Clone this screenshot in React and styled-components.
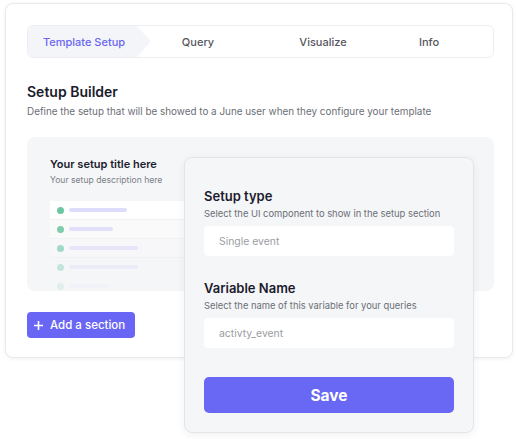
import React from 'react';
import styled, { createGlobalStyle } from 'styled-components';

const GlobalStyle = createGlobalStyle`
  html, body {
    margin: 0;
    padding: 0;
    background: #ffffff;
    font-family: Inter, "Noto Sans", sans-serif;
    -webkit-font-smoothing: antialiased;
  }
`;

const Stage = styled.div`
  position: relative;
  width: 518px;
  height: 439px;
  padding: 3px 5px 0 5px;
  box-sizing: border-box;
`;

const Card = styled.div`
  width: 508px;
  height: 355px;
  box-sizing: border-box;
  border: 1px solid #e8e9ec;
  border-radius: 8px;
  background: #fff;
  box-shadow: 0 1px 4px rgba(20, 20, 40, 0.06);
  padding: 21px 18px 0 21px;
`;

const Stepper = styled.div`
  display: flex;
  height: 33px;
  border: 1px solid #eceef1;
  border-radius: 6px;
  overflow: hidden;
  box-sizing: border-box;
`;

const Step = styled.div`
  flex: 0 0 ${(p) => p.$w}px;
  display: flex;
  align-items: center;
  justify-content: center;
  font-size: 11px;
  font-weight: 500;
  color: ${(p) => (p.$active ? '#6a66f0' : '#55575e')};
  background: ${(p) => (p.$active ? '#f4f5f8' : 'transparent')};
  padding-right: ${(p) => (p.$active ? 11 : 0)}px;
  box-sizing: border-box;
  clip-path: ${(p) =>
    p.$active ? 'polygon(0 0, calc(100% - 14px) 0, 100% 50%, calc(100% - 14px) 100%, 0 100%)' : 'none'};
`;

const Heading = styled.h2`
  margin: 25px 0 0 0;
  font-size: 14px;
  font-weight: 600;
  color: #1b1c2b;
  line-height: 18px;
`;

const Desc = styled.p`
  margin: 3px 0 0 0;
  font-size: 9.9px;
  color: #6b6e76;
  line-height: 14px;
`;

const Preview = styled.div`
  margin-top: 19px;
  height: 154px;
  background: #f5f6f8;
  border-radius: 8px;
  padding: 20px 0 0 23px;
  box-sizing: border-box;
  overflow: hidden;
`;

const PreviewTitle = styled.div`
  font-size: 11px;
  font-weight: 600;
  color: #1b1c2b;
  line-height: 14px;
`;

const PreviewDesc = styled.div`
  margin-top: 3px;
  font-size: 8.6px;
  color: #7b7e86;
  line-height: 12px;
`;

const List = styled.div`
  margin-top: 15px;
  width: 140px;
  display: flex;
  flex-direction: column;
`;

const ListRow = styled.div`
  height: 18px;
  display: flex;
  align-items: center;
  gap: 5px;
  padding-left: 7px;
  background: rgba(255, 255, 255, ${(p) => p.$bg});
  border-bottom: 1px solid #f0f1f4;
  opacity: ${(p) => p.$o};
`;

const Dot = styled.span`
  width: 7px;
  height: 7px;
  border-radius: 50%;
  background: #6cc6a1;
`;

const Line = styled.span`
  width: ${(p) => p.$w}px;
  height: 4px;
  border-radius: 2px;
  background: #dedcfb;
`;

const AddButton = styled.button`
  margin-top: 21px;
  display: inline-flex;
  align-items: center;
  gap: 7px;
  height: 26px;
  padding: 0 10px 0 7px;
  border: none;
  border-radius: 4px;
  background: #6a66f5;
  color: #fff;
  font-family: inherit;
  font-size: 11.5px;
  font-weight: 500;
`;

const Overlay = styled.div`
  position: absolute;
  left: 184px;
  top: 157px;
  width: 290px;
  height: 276px;
  box-sizing: border-box;
  background: #f5f6f8;
  border: 1px solid #e3e5e9;
  border-radius: 8px;
  box-shadow: 0 2px 8px rgba(20, 20, 40, 0.06);
  padding: 30px 19px 0 19px;
  display: flex;
  flex-direction: column;
`;

const Field = styled.div`
  display: flex;
  flex-direction: column;
  margin-bottom: ${(p) => p.$mb}px;
`;

const FieldLabel = styled.div`
  font-size: 13px;
  font-weight: 600;
  color: #1b1c2b;
  line-height: 17px;
`;

const FieldHint = styled.div`
  margin-top: 3px;
  font-size: 9.4px;
  color: #6b6e76;
  line-height: 12px;
`;

const Input = styled.div`
  margin-top: 6px;
  height: 30px;
  background: #fff;
  border-radius: 4px;
  display: flex;
  align-items: center;
  padding-left: 15px;
  font-size: 10.4px;
  color: #9a9ca3;
`;

const SaveButton = styled.button`
  height: 36px;
  border: none;
  border-radius: 5px;
  background: #6868f5;
  color: #fff;
  font-family: Inter, sans-serif;
  font-size: 15.5px;
  font-weight: 700;
`;

const rows = [
  { w: 58, o: 1, bg: 1 },
  { w: 44, o: 0.85, bg: 0.6 },
  { w: 69, o: 0.6, bg: 0.3 },
  { w: 69, o: 0.35, bg: 0.15 },
  { w: 40, o: 0.15, bg: 0 },
];

export default function App() {
  return (
    <>
      <GlobalStyle />
      <Stage>
        <Card>
          <Stepper>
            <Step $active $w={123}>Template Setup</Step>
            <Step $w={94}>Query</Step>
            <Step $w={156}>Visualize</Step>
            <Step $w={56}>Info</Step>
          </Stepper>
          <Heading>Setup Builder</Heading>
          <Desc>Define the setup that will be showed to a June user when they configure your template</Desc>
          <Preview>
            <PreviewTitle>Your setup title here</PreviewTitle>
            <PreviewDesc>Your setup description here</PreviewDesc>
            <List>
              {rows.map((r, i) => (
                <ListRow key={i} $o={r.o} $bg={r.bg}>
                  <Dot />
                  <Line $w={r.w} />
                </ListRow>
              ))}
            </List>
          </Preview>
          <AddButton>
            <svg width="9" height="9" viewBox="0 0 9 9">
              <path d="M4.5 0.5v8M0.5 4.5h8" stroke="#fff" strokeWidth="1.6" strokeLinecap="round" />
            </svg>
            Add a section
          </AddButton>
        </Card>
        <Overlay>
          <Field $mb={24}>
            <FieldLabel>Setup type</FieldLabel>
            <FieldHint>Select the UI component to show in the setup section</FieldHint>
            <Input>Single event</Input>
          </Field>
          <Field $mb={29}>
            <FieldLabel>Variable Name</FieldLabel>
            <FieldHint>Select the name of this variable for your queries</FieldHint>
            <Input>activty_event</Input>
          </Field>
          <SaveButton>Save</SaveButton>
        </Overlay>
      </Stage>
    </>
  );
}
